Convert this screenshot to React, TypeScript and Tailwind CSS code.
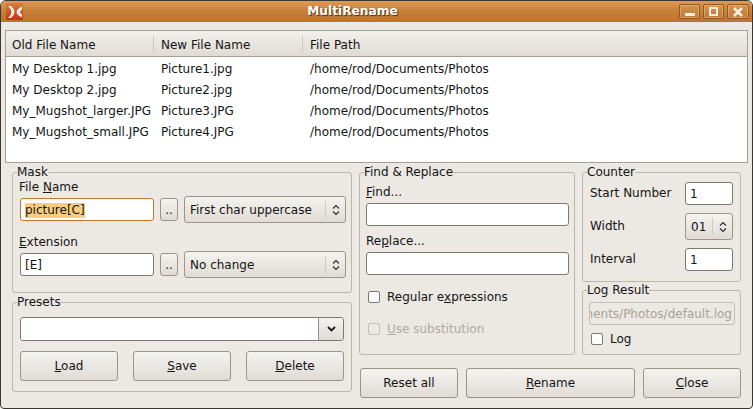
import React from "react";

function Group({ title, className, inner, children }: { title: string; className: string; inner: string; children: React.ReactNode }) {
  return (
    <fieldset className={"border border-[#bcb5aa] rounded-[3px] " + className}>
      <legend className="ml-[4px] p-0 h-[15px] leading-[15px]">{title}</legend>
      <div className={inner}>{children}</div>
    </fieldset>
  );
}

function TextInput({ className, children }: { className: string; children?: React.ReactNode }) {
  return (
    <div className={"h-[23px] bg-white border border-[#7f786c] rounded-[3px] flex items-center pl-1 pt-[1px] overflow-hidden shrink-0 " + className}>
      {children}
    </div>
  );
}

const btn = "border border-[#9c9488] rounded-[3px] bg-gradient-to-b from-[#f5f3f0] to-[#e0dbd4] flex items-center justify-center shrink-0";
const wm = "h-[15px] border border-[#8d5a24] rounded-[2px] bg-gradient-to-b from-[#d49450] to-[#bd7a35] shadow-[inset_0_0_0_1px_rgba(255,235,205,0.3)] flex justify-center";

function Updown() {
  return (
    <svg width="8" height="12" viewBox="0 0 8 12" fill="none" stroke="#2e2e2e" strokeWidth="1.2">
      <path d="M1 4.5 L4 1.5 L7 4.5" />
      <path d="M1 7.5 L4 10.5 L7 7.5" />
    </svg>
  );
}

function Combo({ text, className }: { text: string; className: string }) {
  return (
    <div className={"h-[27px] flex items-center " + btn + " " + className}>
      <span className="flex-1 pl-[5px] pt-[1px] whitespace-nowrap">{text}</span>
      <span className="h-[17px] w-px bg-[#cfc9c0]" />
      <span className="w-[19px] flex justify-center"><Updown /></span>
    </div>
  );
}

function Check({ disabled }: { disabled?: boolean }) {
  return (
    <span className={"w-[12px] h-[12px] border rounded-[2px] shrink-0 " + (disabled ? "border-[#c4beb5] bg-[#ece8e3]" : "border-[#7f786c] bg-white")} />
  );
}

const rows = [
  ["My Desktop 1.jpg", "Picture1.jpg"],
  ["My Desktop 2.jpg", "Picture2.jpg"],
  ["My_Mugshot_larger.JPG", "Picture3.JPG"],
  ["My_Mugshot_small.JPG", "Picture4.JPG"],
];

export default function App() {
  return (
    <div className="w-[753px] h-[409px] bg-[#ece8e3] border border-[#3a3631] rounded-t-[6px] rounded-b-[4px] overflow-hidden text-[12px] text-[#141414] font-['DejaVu_Sans',sans-serif] flex flex-col">
      <div className="h-[21px] shrink-0 bg-gradient-to-b from-[#dd9a55] via-[#c67f38] to-[#b9752f] flex items-center relative">
        <svg className="absolute left-[5px] top-[2px]" width="17" height="17" viewBox="0 0 17 17">
          <defs>
            <linearGradient id="ic" x1="0" y1="0" x2="0" y2="1">
              <stop offset="0" stopColor="#d3823f" />
              <stop offset="1" stopColor="#c8301c" />
            </linearGradient>
          </defs>
          <rect width="17" height="17" rx="1" fill="url(#ic)" />
          <path d="M2 3 L5 3 Q8.5 6 8.5 9 Q8.5 12 5 15 L2 15 Q5.5 12 5.5 9 Q5.5 6 2 3 Z" fill="#f6ece2" />
          <path d="M16 3.5 Q11 6 10.5 9 Q11 12 16 14.5 L16 11.5 Q14 10.5 14 9 Q14 7.5 16 6.5 Z" fill="#f6ece2" />
        </svg>
        <div className="flex-1 text-center text-white font-bold text-[12.2px] [text-shadow:1px_1px_1px_#4a2c0c] pr-[48px]">MultiRename</div>
        <div className="absolute right-[3px] top-[3px] flex gap-[3px]">
          <div className={"w-[21px] items-end pb-[2px] " + wm}>
            <span className="w-[10px] h-[3px] bg-[#f8eee0]" />
          </div>
          <div className={"w-[21px] items-center " + wm}>
            <span className="w-[9px] h-[9px] border-2 border-[#f8eee0]" />
          </div>
          <div className={"w-[22px] items-center " + wm}>
            <svg width="10" height="10" viewBox="0 0 10 10" stroke="#f8eee0" strokeWidth="2.6"><path d="M1 1 L9 9 M9 1 L1 9" /></svg>
          </div>
        </div>
      </div>

      <div className="flex-1 flex flex-col pl-[4px] pt-[8px]">
        <div className="w-[743px] h-[133px] shrink-0 bg-white border border-[#a89f92]">
          <div className="h-[26px] bg-gradient-to-b from-[#f3f1ed] to-[#dfdad4] border-b border-[#a89f92] grid grid-cols-[149px_149px_1fr] items-center">
            {["Old File Name", "New File Name", "File Path"].map((h, i) => (
              <div key={h} className={"pl-[6px] h-[18px] leading-[20px] " + (i < 2 ? "mr-[1px] border-r border-[#cfc9c0]" : "")}>{h}</div>
            ))}
          </div>
          <div className="pt-[1px]">
            {rows.map((r) => (
              <div key={r[0]} className="h-[21px] leading-[22px] grid grid-cols-[149px_149px_1fr] pl-[6px]">
                <div className="whitespace-nowrap">{r[0]}</div>
                <div className="whitespace-nowrap">{r[1]}</div>
                <div className="whitespace-nowrap">/home/rod/Documents/Photos</div>
              </div>
            ))}
          </div>
        </div>

        <div className="flex pl-[7px] pt-[2px]">
          <div className="w-[340px] flex flex-col gap-[2px]">
            <Group title="Mask" className="h-[128px]" inner="pl-[7px]">
              <div className="h-[14px] leading-[14px] -ml-[1px]">File <u>N</u>ame</div>
              <div className="flex items-center gap-[6px] mt-[2px]">
                <TextInput className="w-[134px] border-[#c7782a]">
                  <span className="bg-[#f9cd7e] leading-[15px]">picture[C]</span>
                </TextInput>
                <div className={"w-[18px] h-[23px] " + btn}>..</div>
                <Combo text="First char uppercase" className="w-[162px]" />
              </div>
              <div className="h-[14px] leading-[14px] -ml-[1px] mt-[12px]"><u>E</u>xtension</div>
              <div className="flex items-center gap-[6px] mt-[2px]">
                <TextInput className="w-[134px]">[E]</TextInput>
                <div className={"w-[18px] h-[23px] " + btn}>..</div>
                <Combo text="No change" className="w-[162px]" />
              </div>
            </Group>
            <Group title="Presets" className="h-[97px]" inner="pl-[7px]">
              <div className="flex h-[24px] w-[324px] mt-[7px] border border-[#7f786c] rounded-[3px] overflow-hidden">
                <div className="flex-1 bg-white" />
                <div className="w-[25px] border-l border-[#9c9488] bg-gradient-to-b from-[#f5f3f0] to-[#e0dbd4] flex items-center justify-center">
                  <svg width="9" height="6" viewBox="0 0 9 6" fill="none" stroke="#1a1a1a" strokeWidth="1.8"><path d="M1 1 L4.5 4.5 L8 1" /></svg>
                </div>
              </div>
              <div className="flex justify-between w-[324px] mt-[10px]">
                <div className={"w-[98px] h-[30px] " + btn}><span><u>L</u>oad</span></div>
                <div className={"w-[98px] h-[30px] " + btn}><span><u>S</u>ave</span></div>
                <div className={"w-[98px] h-[30px] " + btn}><span><u>D</u>elete</span></div>
              </div>
            </Group>
          </div>

          <div className="w-[382px] ml-[7px] flex flex-col">
            <div className="flex gap-[7px]">
              <Group title="Find & Replace" className="w-[216px] h-[190px]" inner="pl-[6px]">
                <div className="h-[14px] leading-[14px] mt-[5px]"><u>F</u>ind...</div>
                <TextInput className="w-[203px] mt-[4px]" />
                <div className="h-[14px] leading-[14px] mt-[8px]">Re<u>p</u>lace...</div>
                <TextInput className="w-[203px] mt-[4px]" />
                <div className="h-[14px] flex items-center gap-[7px] mt-[15px] ml-[2px]">
                  <Check /><span>Regular e<u>x</u>pressions</span>
                </div>
                <div className="h-[14px] flex items-center gap-[7px] mt-[18px] ml-[2px] text-[#b0aaa0]">
                  <Check disabled /><span><u>U</u>se substitution</span>
                </div>
              </Group>
              <div className="w-[159px] flex flex-col gap-px">
                <Group title="Counter" className="h-[117px]" inner="pl-[7px] pr-[7px]">
                  <div className="flex items-center justify-between mt-[2px]">
                    <span className="pb-[2px]">Start Number</span>
                    <TextInput className="w-[48px]">1</TextInput>
                  </div>
                  <div className="flex items-center justify-between mt-[8px]">
                    <span className="pb-[2px]">Width</span>
                    <div className={"w-[48px] h-[27px] " + btn}>
                      <span className="flex-1 pl-[5px] pt-[1px]">01</span>
                      <span className="h-[17px] w-px bg-[#cfc9c0]" />
                      <span className="w-[19px] flex justify-center"><Updown /></span>
                    </div>
                  </div>
                  <div className="flex items-center justify-between mt-[8px]">
                    <span className="pb-[2px]">Interval</span>
                    <TextInput className="w-[48px]">1</TextInput>
                  </div>
                </Group>
                <Group title="Log Result" className="h-[72px]" inner="pl-[6px]">
                  <div className="w-[146px] h-[23px] mt-[4px] bg-[#ece8e3] border border-[#c4beb5] rounded-[3px] text-[#a8a298] overflow-hidden flex items-center justify-end pr-[2px] whitespace-nowrap">
                    /home/rod/Documents/Photos/default.log
                  </div>
                  <div className="h-[14px] flex items-center gap-[7px] mt-[7px] ml-[2px]">
                    <Check /><span>Log</span>
                  </div>
                </Group>
              </div>
            </div>
            <div className="flex mt-[13px] pl-[1px]">
              <div className={"w-[98px] h-[30px] " + btn}>Reset all</div>
              <div className={"w-[169px] h-[30px] ml-[8px] " + btn}><span><u>R</u>ename</span></div>
              <div className={"w-[98px] h-[30px] ml-[8px] " + btn}><span><u>C</u>lose</span></div>
            </div>
          </div>
        </div>
      </div>
    </div>
  );
}
